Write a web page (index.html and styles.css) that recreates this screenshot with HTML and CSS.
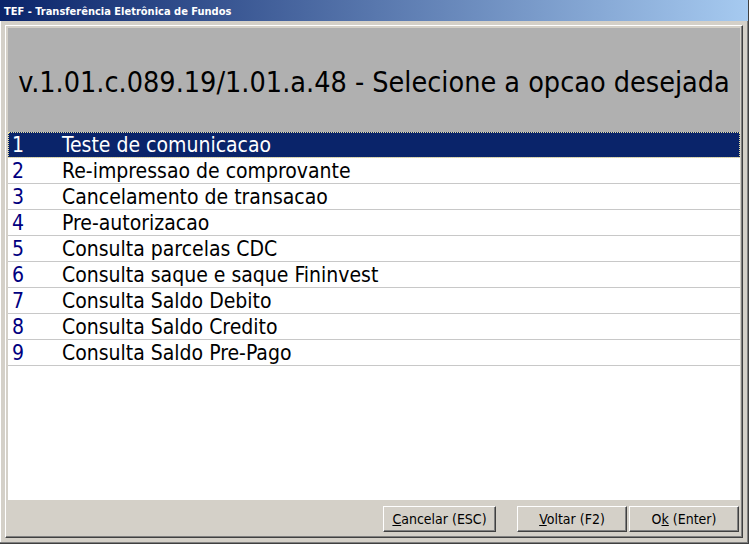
FILE: index.html
```html
<!DOCTYPE html>
<html lang="pt">
<head>
    <meta charset="UTF-8">
    <title>TEF - Transferência Eletrônica de Fundos</title>
    <link rel="stylesheet" href="styles.css">
</head>
<body>
    <div class="janela">
        <div class="titulo">TEF - Transferência Eletrônica de Fundos</div>
        <div class="painel">
            <div class="cabecalho">v.1.01.c.089.19/1.01.a.48 - Selecione a opcao desejada</div>
            <ul class="lista">
                <li class="item ativo"><span class="num">1</span>Teste de comunicacao</li>
                <li class="item"><span class="num">2</span>Re-impressao de comprovante</li>
                <li class="item"><span class="num">3</span>Cancelamento de transacao</li>
                <li class="item"><span class="num">4</span>Pre-autorizacao</li>
                <li class="item"><span class="num">5</span>Consulta parcelas CDC</li>
                <li class="item"><span class="num">6</span>Consulta saque e saque Fininvest</li>
                <li class="item"><span class="num">7</span>Consulta Saldo Debito</li>
                <li class="item"><span class="num">8</span>Consulta Saldo Credito</li>
                <li class="item"><span class="num">9</span>Consulta Saldo Pre-Pago</li>
            </ul>
            <div class="rodape">
                <button class="botao cancelar"><u>C</u>ancelar (ESC)</button>
                <button class="botao voltar"><u>V</u>oltar (F2)</button>
                <button class="botao"><span>O<u>k</u> (Enter)</span></button>
            </div>
        </div>
    </div>
</body>
</html>
```

FILE: styles.css
```css
body {
    margin: 0;
    background-color: #d4d0c8;
    overflow: hidden;
}
.janela {
    width: 749px;
    height: 544px;
    box-sizing: border-box;
    display: flex;
    flex-direction: column;
    background-color: #d4d0c8;
    border-right: 1px solid #404040;
    border-bottom: 1px solid #404040;
    box-shadow: inset -1px -1px #808080, inset 1px 0 #ffffff;
}
.titulo {
    height: 21px;
    line-height: 24px;
    padding-left: 4px;
    color: #ffffff;
    font-family: "DejaVu Sans Condensed", "DejaVu Sans", sans-serif;
    font-weight: bold;
    font-size: 11px;
    background: linear-gradient(to right, #0a246a, #a6caf0);
}
.painel {
    flex: 1;
    margin: 4px 5px 5px 5px;
    display: flex;
    flex-direction: column;
    border-top: 1px solid #ffffff;
    border-left: 1px solid #ffffff;
    border-right: 1px solid #404040;
    border-bottom: 1px solid #404040;
    box-shadow: inset -1px -1px #808080, inset 1px 1px #d4d0c8;
    padding: 2px 2px 2px 2px;
}
.cabecalho {
    height: 104px;
    box-sizing: border-box;
    padding-top: 4px;
    display: flex;
    align-items: center;
    justify-content: center;
    background-color: #b0b0b0;
    font-family: "DejaVu Sans Condensed", "DejaVu Sans", sans-serif;
    font-size: 28.5px;
    color: #000000;
}
.lista {
    flex: 1;
    list-style: none;
    margin: 0;
    padding: 0;
    background-color: #ffffff;
}
.item {
    height: 25px;
    line-height: 27px;
    border-bottom: 1px solid #c8c8c8;
    font-family: "DejaVu Sans Condensed", "DejaVu Sans", sans-serif;
    font-size: 21px;
    color: #000000;
    display: flex;
}
.num {
    width: 50px;
    padding-left: 4px;
    color: #000080;
}
.ativo {
    background-color: #0a246a;
    color: #ffffff;
    outline: 1px dotted #e8e0a0;
    outline-offset: -1px;
}
.ativo .num {
    color: #ffffff;
}
.rodape {
    height: 35px;
    display: flex;
    align-items: center;
    justify-content: flex-end;
    padding-top: 3px;
    padding-right: 1px;
    gap: 2px;
    box-sizing: border-box;
}
.botao {
    width: 110px;
    height: 26px;
    padding: 0;
    background-color: #d4d0c8;
    border-top: 1px solid #ffffff;
    border-left: 1px solid #ffffff;
    border-right: 1px solid #404040;
    border-bottom: 1px solid #404040;
    box-shadow: inset -1px -1px #808080;
    font-family: "DejaVu Sans Condensed", "DejaVu Sans", sans-serif;
    font-size: 14px;
    color: #000000;
}
.cancelar {
    width: 113px;
    margin-right: 19px;
}
```
